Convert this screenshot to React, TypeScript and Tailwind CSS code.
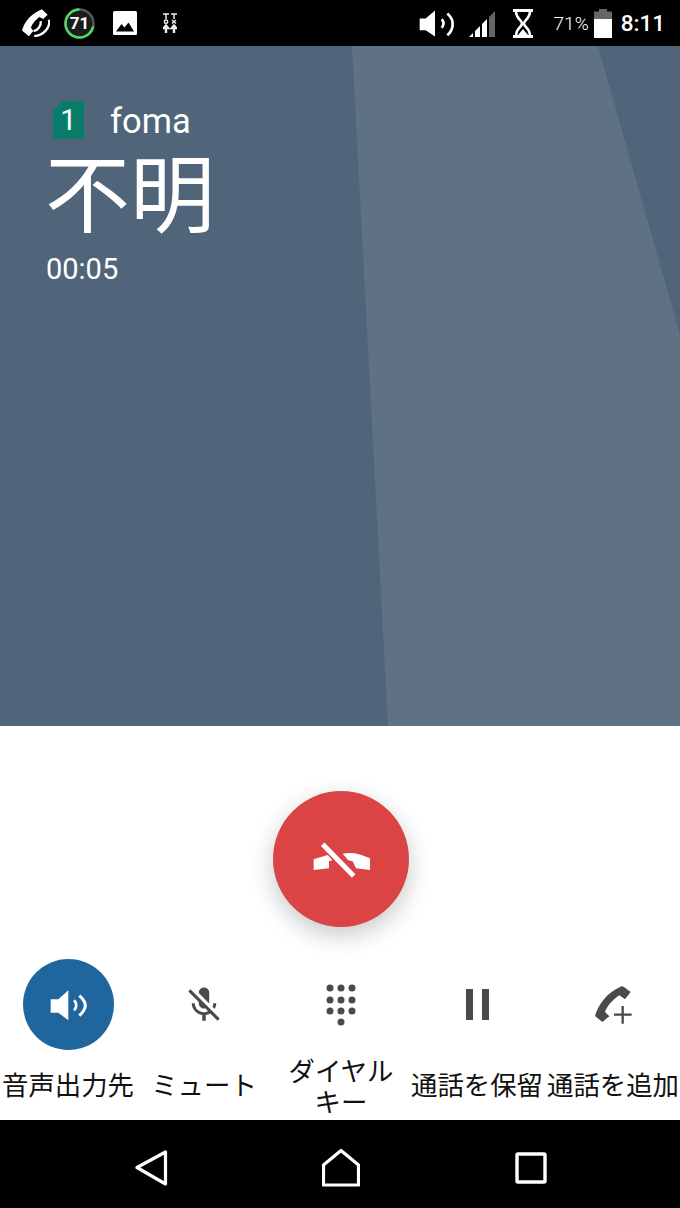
const sans = "font-['Roboto','Noto_Sans_CJK_JP',sans-serif]";

function StatusBar() {
  return (
    <div className="flex h-[46px] shrink-0 items-center bg-black pl-[22px] pr-[15px] text-white">
      <svg width="28" height="28" viewBox="65 30 85 84" className="shrink-0">
        <path d="M125 30 L143 47 L129 60 L118 54 C106 62 97 74 92 86 L99 96 L86 112 L65 95 C72 66 96 42 125 30Z" fill="#fff" />
        <path d="M122 66 C124 82 112 94 100 97" fill="none" stroke="#fff" strokeWidth="7" />
        <path d="M147 62 C152 88 128 110 102 112" fill="none" stroke="#fff" strokeWidth="7" />
      </svg>
      <div className="relative ml-[14px] flex h-[31px] w-[31px] shrink-0 items-center justify-center">
        <svg width="31" height="31" viewBox="0 0 31 31" className="absolute inset-0">
          <circle cx="15.5" cy="15.5" r="14" fill="#1c1c1c" stroke="#555" strokeWidth="2.5" />
          <circle cx="15.5" cy="15.5" r="14" fill="none" stroke="#4fd964" strokeWidth="2.5" strokeDasharray="62.5 88" transform="rotate(-90 15.5 15.5) scale(1 -1) translate(0 -31)" />
        </svg>
        <span className="relative font-['Roboto',sans-serif] text-[17px] font-bold leading-none">71</span>
      </div>
      <svg width="24" height="24" viewBox="0 0 24 24" className="ml-[18px] shrink-0">
        <rect width="24" height="24" rx="1.5" fill="#fff" />
        <path d="M3 20.5 L8.5 13 L11.5 16.5 L15.5 11.5 L21 20.5Z" fill="#000" />
      </svg>
      <svg width="14" height="20" viewBox="0 0 14 20" className="ml-[26px] shrink-0" fill="none" stroke="#eee" strokeWidth="1.5">
        <path d="M0 1h6M3 1v5M8 1h6M11 1v5" />
        <circle cx="3" cy="8.8" r="1.7" />
        <path d="M9 7l4 3.5M13 7l-4 3.5" />
        <path d="M3 12v8M11 12v8" strokeWidth="2.4" />
        <path d="M0 15.5 L3 12 L6 15.5Z M8 15.5 L11 12 L14 15.5Z" fill="#eee" />
      </svg>
      <div className="flex-1" />
      <svg width="36" height="31" viewBox="60 25 108 80" className="shrink-0">
        <path d="M62 50 H80 L108 26 V104 L80 85 H62Z" fill="#fff" />
        <path d="M128 52 a18 18 0 0 1 0 26" fill="none" stroke="#fff" strokeWidth="8" />
        <path d="M145 35 C172 58 160 88 145 100" fill="none" stroke="#fff" strokeWidth="8" />
      </svg>
      <svg width="26" height="28" viewBox="0 0 26 28" className="ml-[14px] shrink-0">
        <path d="M0 28 L4 24 V28Z M6 28 V22 L11 17 V28Z" fill="#fff" />
        <path d="M13 28 V15 L18 10 V28Z" fill="#fff" />
        <path d="M20 28 V8 L26 2 V28Z" fill="#666" />
      </svg>
      <svg width="20" height="29" viewBox="0 0 20 29" className="ml-[18px] shrink-0" fill="none" stroke="#fff" strokeWidth="2.6">
        <path d="M0 1.5 H20 M0 27.5 H20" strokeWidth="3" />
        <path d="M3 2 C3 10 9 11 9 14.5 C9 18 3 19 3 27 M17 2 C17 10 11 11 11 14.5 C11 18 17 19 17 27" />
        <path d="M5 26 L10 20 L15 26Z" fill="#fff" stroke="none" />
      </svg>
      <span className="ml-[21px] font-['Roboto',sans-serif] text-[19px] font-light leading-none">71%</span>
      <svg width="18" height="29" viewBox="0 0 18 29" className="ml-[5px] shrink-0">
        <path d="M5 0 H13 V2.5 H18 V11 H0 V2.5 H5Z" fill="#666" />
        <rect y="10" width="18" height="19" fill="#fff" />
      </svg>
      <span className="ml-[9px] font-['Roboto',sans-serif] text-[22.5px] font-medium leading-none">8:11</span>
    </div>
  );
}

function CallInfo() {
  return (
    <div className="relative h-[680px] shrink-0 overflow-hidden bg-[#50657a] pl-[45px] pt-[52px] text-white">
      <div className="absolute inset-0 bg-[#5e7283] [clip-path:polygon(352px_0,598px_0,680px_289px,680px_680px,388px_680px)]" />
      <div className="relative">
        <div className="flex h-[44px] items-center">
          <div className="ml-[8px] flex h-[38px] w-[31px] items-center justify-center bg-[#0a7c6a] font-['Roboto',sans-serif] text-[29px] leading-none [clip-path:polygon(10px_0,100%_0,100%_100%,0_100%,0_10px)]">
            1
          </div>
          <span className="ml-[26px] pt-[2px] font-['Roboto',sans-serif] text-[34.5px] leading-none">foma</span>
        </div>
        <div className="mt-[1px] font-['Noto_Sans_CJK_JP',sans-serif] text-[85px] leading-[92px]">不明</div>
        <div className="mt-[14px] pl-[1px] font-['Roboto',sans-serif] text-[29px] leading-[40px]">00:05</div>
      </div>
    </div>
  );
}

function Speaker() {
  return (
    <svg width="44" height="44" viewBox="138 96 132 132">
      <path d="M152 145 H175 L205 118 V208 L175 185 H152Z" fill="#fff" />
      <path d="M222 148 a20 20 0 0 1 0 30" fill="none" stroke="#fff" strokeWidth="8" />
      <path d="M238 134 C262 155 262 172 238 194" fill="none" stroke="#fff" strokeWidth="9" />
    </svg>
  );
}

function Mic() {
  return (
    <svg width="42" height="42" viewBox="0 0 24 24" fill="#4a4a4a">
      <path d="M19 11h-1.7c0 .74-.16 1.43-.43 2.05l1.23 1.23c.56-.98.9-2.09.9-3.28zm-4.02.17c0-.06.02-.11.02-.17V5c0-1.66-1.34-3-3-3S9 3.34 9 5v.18l5.98 5.99zM4.27 3L3 4.27l6.01 6.01V11c0 1.66 1.33 3 2.99 3 .22 0 .44-.03.65-.08l1.66 1.66c-.71.33-1.5.52-2.31.52-2.76 0-5.3-2.1-5.3-5.1H5c0 3.41 2.72 6.23 6 6.72V21h2v-3.28c.91-.13 1.77-.45 2.54-.9L19.73 21 21 19.73 4.27 3z" />
    </svg>
  );
}

function Dial() {
  const dots = [
    [4, 4], [15, 4], [26, 4],
    [4, 16], [15, 16], [26, 16],
    [4, 27], [15, 27], [26, 27],
    [15, 38],
  ];
  return (
    <svg width="30" height="42" viewBox="0 0 30 42" fill="#4a4a4a" className="mr-[1px]">
      {dots.map(([x, y]) => (
        <circle key={`${x}-${y}`} cx={x} cy={y} r="3.5" />
      ))}
    </svg>
  );
}

function Pause() {
  return (
    <svg width="23" height="31" viewBox="0 0 23 31" fill="#4a4a4a">
      <rect width="7" height="31" />
      <rect x="16" width="7" height="31" />
    </svg>
  );
}

function AddCall() {
  return (
    <svg width="38" height="38" viewBox="765 107 114 114" fill="#4a4a4a" className="ml-[2px]">
      <path d="M840 110 Q846 106 852 110 L872 125 L855 147 L838 135 C815 150 800 170 795 185 L808 198 L787 215 L765 197 C775 160 805 125 840 110Z" />
      <path d="M848 167 V220 M822 193 H875" fill="none" stroke="#4a4a4a" strokeWidth="7" />
    </svg>
  );
}

function Action({ icon, label, active, shift }: { icon: React.ReactNode; label: React.ReactNode; active?: boolean; shift?: boolean }) {
  return (
    <div className={`flex flex-col items-center ${shift ? 'pl-[2px]' : ''}`}>
      <div className={`flex h-[91px] w-[91px] items-center justify-center rounded-full ${active ? 'bg-[#1f669e]' : ''}`}>
        {icon}
      </div>
      <div className="flex h-[66px] w-[140px] shrink-0 items-center justify-center text-center font-['Noto_Sans_CJK_JP',sans-serif] text-[26.4px] leading-[31px] text-[#111]">
        {label}
      </div>
    </div>
  );
}

function Controls() {
  return (
    <div className="flex h-[394px] shrink-0 flex-col items-center bg-white">
      <button className="ml-[2px] mt-[65px] flex h-[136px] w-[136px] shrink-0 items-center justify-center rounded-full bg-[#db4444] shadow-[0_8px_24px_rgba(0,0,0,0.22)]">
        <svg width="64" height="64" viewBox="144 138 192 192">
          <path d="M158 235 L200 222 L214 238 L204 241 L204 262 L158 267Z" fill="#fff" />
          <path d="M245 218 C270 212 300 218 327 232 L327 267 L285 262 L275 241 L262 238Z" fill="#fff" />
          <path d="M192 192 L272 282" stroke="#db4444" strokeWidth="20" />
          <path d="M185 190 L278 285" stroke="#fff" strokeWidth="15" />
        </svg>
      </button>
      <div className="mt-[32px] grid w-full grid-cols-5">
        <Action active icon={<Speaker />} label="音声出力先" />
        <Action icon={<Mic />} label="ミュート" />
        <Action shift icon={<Dial />} label={<span className="block pt-[4px]">ダイヤル<br />キー</span>} />
        <Action shift icon={<Pause />} label="通話を保留" />
        <Action shift icon={<AddCall />} label="通話を追加" />
      </div>
    </div>
  );
}

function NavBar() {
  return (
    <div className="flex h-[88px] shrink-0 items-center justify-center bg-black pt-[8px]">
      <svg width="34" height="36" viewBox="0 0 34 36" fill="none" stroke="#fff" strokeWidth="3.2" strokeLinejoin="round">
        <path d="M3 17.5 L31.5 2 V34Z" />
      </svg>
      <svg width="38" height="38" viewBox="0 0 38 38" fill="none" stroke="#fff" strokeWidth="3.2" strokeLinejoin="round" className="ml-[154px]">
        <path d="M1.5 36 V16 L19 1.5 L36.5 16 V36Z" />
      </svg>
      <svg width="32" height="32" viewBox="0 0 32 32" fill="none" stroke="#fff" strokeWidth="3.4" strokeLinejoin="round" className="ml-[155px]">
        <rect x="2" y="2" width="28" height="28" rx="1" />
      </svg>
    </div>
  );
}

export default function App() {
  return (
    <div className={`flex h-[1208px] w-[680px] flex-col overflow-hidden ${sans}`}>
      <StatusBar />
      <CallInfo />
      <Controls />
      <NavBar />
    </div>
  );
}
